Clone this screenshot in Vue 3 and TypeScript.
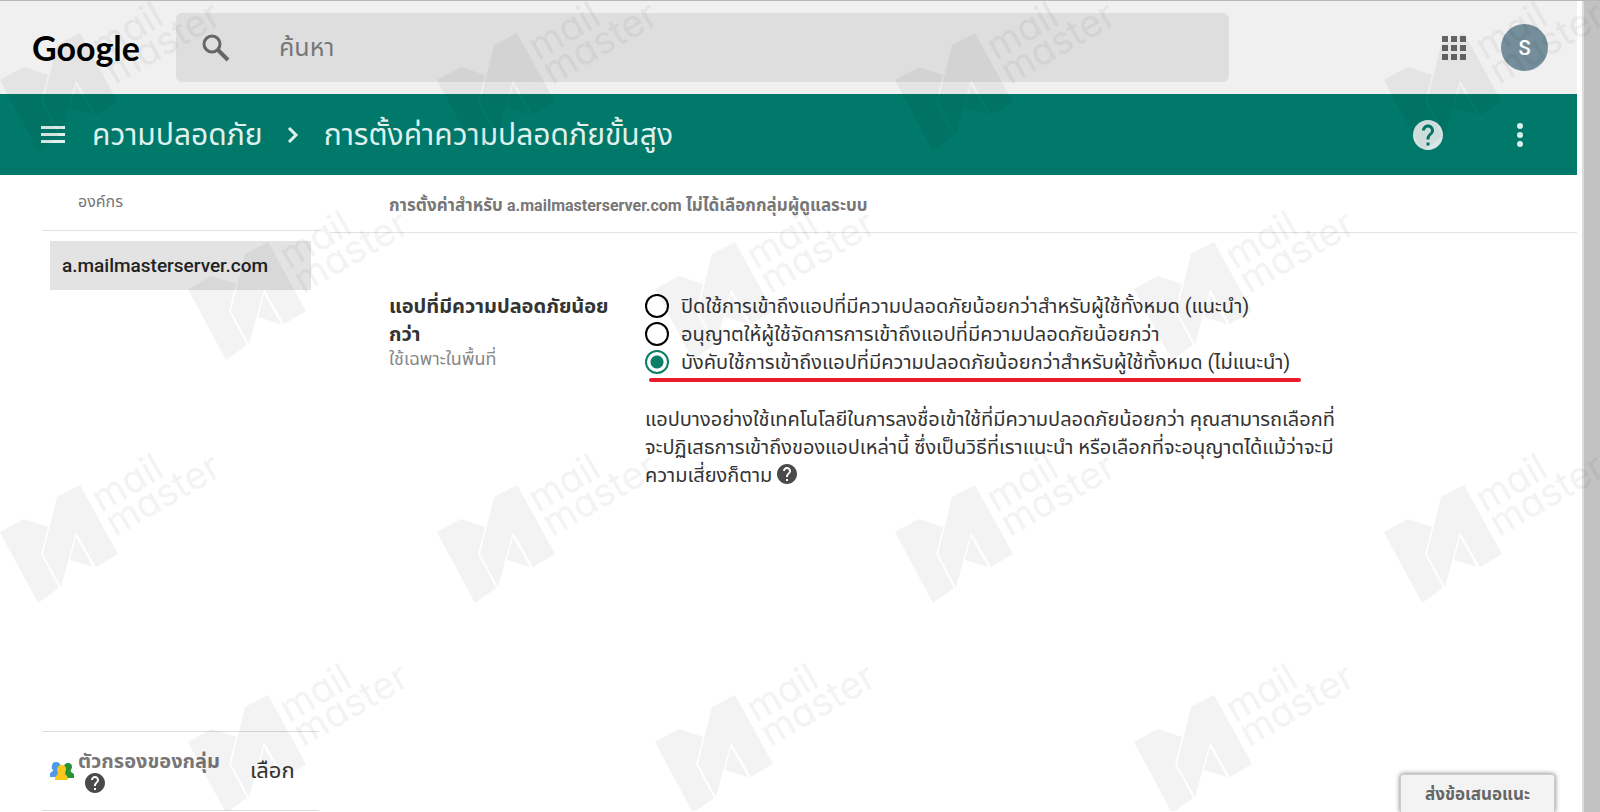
<script setup lang="ts">
import { ref } from 'vue'

interface Option {
  id: string
  label: string
}

const options: Option[] = [
  { id: 'disable', label: 'ปิดใช้การเข้าถึงแอปที่มีความปลอดภัยน้อยกว่าสำหรับผู้ใช้ทั้งหมด (แนะนำ)' },
  { id: 'allow', label: 'อนุญาตให้ผู้ใช้จัดการการเข้าถึงแอปที่มีความปลอดภัยน้อยกว่า' },
  { id: 'enforce', label: 'บังคับใช้การเข้าถึงแอปที่มีความปลอดภัยน้อยกว่าสำหรับผู้ใช้ทั้งหมด (ไม่แนะนำ)' },
]
const selected = ref('enforce')
const query = ref('')

const marks: [number, number][] = [
  [0, -12], [437, -12], [895, -12], [1384, -12],
  [188, 197], [655, 197], [1134, 197],
  [0, 440], [437, 440], [895, 440], [1384, 440],
  [188, 650], [655, 650], [1134, 650],
]
</script>

<template>
  <div class="window">
    <div class="page">
      <header class="top">
        <a class="logo" href="#">Google</a>
        <label class="search">
          <svg class="search-icon" viewBox="0 0 26 26" aria-hidden="true">
            <circle cx="9" cy="9" r="8" fill="none" stroke="#666" stroke-width="3" />
            <path d="M15 15L25 25" stroke="#666" stroke-width="4" />
          </svg>
          <input v-model="query" type="text" placeholder="ค้นหา" aria-label="ค้นหา" />
        </label>
        <button class="icon-btn apps" aria-label="แอป">
          <svg width="24" height="24" viewBox="0 0 24 24" fill="#666">
            <path d="M0 0h6v6H0zM9 0h6v6H9zM18 0h6v6h-6zM0 9h6v6H0zM9 9h6v6H9zM18 9h6v6h-6zM0 18h6v6H0zM9 18h6v6H9zM18 18h6v6h-6z" />
          </svg>
        </button>
        <button class="avatar">S</button>
      </header>

      <nav class="bar">
        <button class="icon-btn" aria-label="เมนู">
          <svg width="24" height="20" viewBox="0 0 24 20" fill="#dff0ed">
            <path d="M0 1h24v3H0zM0 8h24v3H0zM0 15h24v3H0z" />
          </svg>
        </button>
        <a class="crumb first" href="#">ความปลอดภัย</a>
        <svg class="chevron" width="12" height="18" viewBox="0 0 12 18" aria-hidden="true">
          <path d="M2 2l7 7-7 7" fill="none" stroke="#dff0ed" stroke-width="3" />
        </svg>
        <h1 class="crumb">การตั้งค่าความปลอดภัยขั้นสูง</h1>
        <button class="icon-btn help" aria-label="ความช่วยเหลือ">
          <svg width="30" height="30" viewBox="2 2 20 20" fill="#d9e8e6">
            <path d="M12 2C6.480 2 2 6.480 2 12s4.480 10 10 10 10-4.480 10-10S17.520 2 12 2zm1 17h-2v-2h2v2zm2.070-7.750l-.9.920C13.450 12.900 13 13.500 13 15h-2v-.5c0-1.100.45-2.100 1.170-2.830l1.240-1.260c.37-.36.59-.86.59-1.410 0-1.100-.9-2-2-2s-2 .9-2 2H8c0-2.210 1.790-4 4-4s4 1.790 4 4c0 .88-.36 1.680-.93 2.250z" />
          </svg>
        </button>
        <button class="icon-btn more" aria-label="เพิ่มเติม">
          <svg width="6" height="24" viewBox="0 0 6 24" fill="#d9f0ed">
            <circle cx="3" cy="3" r="3" /><circle cx="3" cy="12" r="3" /><circle cx="3" cy="21" r="3" />
          </svg>
        </button>
      </nav>

      <div class="body">
        <aside class="side">
          <h2 class="side-title">องค์กร</h2>
          <a class="org" href="#">a.mailmasterserver.com</a>
          <div class="filter">
            <svg class="people" width="24" height="20" viewBox="0 0 24 20" aria-hidden="true">
              <path d="M6 1c3 0 5 2 4 5 0 2-1 3 0 4v6H0v-3c0-2 2-2 3-3 0-2-2-2-1-5 0-2 1-4 4-4z" fill="#4e9ae8" />
              <path d="M18 2c3 0 4 2 4 4s-2 3-1 5c1 1 3 1 3 3v3H12V9c2-1 1-7 6-7z" fill="#259336" />
              <path d="M12 4c3 0 4 2 4 4s-1 3-1 5c1 1 3 2 3 6H5c0-4 2-5 3-6 0-2-1-3-1-5s2-4 5-4z" fill="#fbc61d" />
            </svg>
            <div class="filter-text">
              <strong>ตัวกรองของกลุ่ม</strong>
              <button class="icon-btn" aria-label="เกี่ยวกับตัวกรอง">
                <svg width="20" height="20" viewBox="2 2 20 20" fill="#4a4a4a">
                  <path d="M12 2C6.480 2 2 6.480 2 12s4.480 10 10 10 10-4.480 10-10S17.520 2 12 2zm1 17h-2v-2h2v2zm2.070-7.750l-.9.920C13.450 12.900 13 13.500 13 15h-2v-.5c0-1.100.45-2.100 1.170-2.830l1.240-1.260c.37-.36.59-.86.59-1.410 0-1.100-.9-2-2-2s-2 .9-2 2H8c0-2.210 1.790-4 4-4s4 1.790 4 4c0 .88-.36 1.680-.93 2.250z" />
                </svg>
              </button>
            </div>
            <button class="pick">เลือก</button>
          </div>
        </aside>

        <main class="main">
          <p class="scope">การตั้งค่าสำหรับ <span class="domain">a.mailmasterserver.com</span> ไม่ได้เลือกกลุ่มผู้ดูแลระบบ</p>
          <section class="setting">
            <div class="name">
              <h3 id="setting-name">แอปที่มีความปลอดภัยน้อย<br />กว่า</h3>
              <p>ใช้เฉพาะในพื้นที่</p>
            </div>
            <div class="value">
              <div class="options" role="radiogroup" aria-labelledby="setting-name">
                <label v-for="o in options" :key="o.id" class="option">
                  <input v-model="selected" type="radio" name="access" :value="o.id" />
                  <span>{{ o.label }}</span>
                </label>
              </div>
              <div class="underline"></div>
              <p class="note">
                แอปบางอย่างใช้เทคโนโลยีในการลงชื่อเข้าใช้ที่มีความปลอดภัยน้อยกว่า คุณสามารถเลือกที่<br />
                จะปฏิเสธการเข้าถึงของแอปเหล่านี้ ซึ่งเป็นวิธีที่เราแนะนำ หรือเลือกที่จะอนุญาตได้แม้ว่าจะมี<br />
                ความเสี่ยงก็ตาม
                <button class="icon-btn note-help" aria-label="ดูข้อมูลเพิ่มเติม">
                  <svg width="20" height="20" viewBox="2 2 20 20" fill="#4a4a4a">
                    <path d="M12 2C6.480 2 2 6.480 2 12s4.480 10 10 10 10-4.480 10-10S17.520 2 12 2zm1 17h-2v-2h2v2zm2.070-7.750l-.9.920C13.450 12.900 13 13.500 13 15h-2v-.5c0-1.100.45-2.100 1.170-2.830l1.240-1.260c.37-.36.59-.86.59-1.410 0-1.100-.9-2-2-2s-2 .9-2 2H8c0-2.210 1.790-4 4-4s4 1.790 4 4c0 .88-.36 1.680-.93 2.250z" />
                  </svg>
                </button>
              </p>
            </div>
          </section>
        </main>
      </div>
      <button class="feedback">ส่งข้อเสนอแนะ</button>
    </div>
    <div class="scrollbar"></div>

    <svg class="watermark" aria-hidden="true">
      <g v-for="([x, y], i) in marks" :key="i" :transform="`translate(${x} ${y})`">
        <path d="M0 92L24 79L48 87L41 114L59 148L38 163Z" />
        <path d="M57 57L80 45L118 114L96 127L76 92L61 147L43 114Z" />
        <path d="M76 97L93 127L70 120Z" />
        <g transform="translate(101 73) rotate(-30)">
          <text x="0" y="0">mail</text>
          <text x="0" y="28">master</text>
        </g>
      </g>
    </svg>
  </div>
</template>

<style>
body {
  margin: 0;
}
</style>

<style scoped>
.window {
  position: relative;
  display: flex;
  box-sizing: border-box;
  min-height: 100vh;
  overflow: hidden;
  border-top: 1px solid #b8b8b8;
  background: #fff;
  color: #333;
  font-family: Roboto, "Noto Sans", "Noto Sans Thai", sans-serif;
  font-size: 20px;
  line-height: 28px;
}
.page {
  position: relative;
  display: flex;
  flex: 1;
  flex-direction: column;
  margin-right: 5px;
}
.scrollbar {
  width: 16px;
  border-left: 2px solid #dcdcdc;
  background: #c2c2c2;
}
h1, h2, h3, p {
  margin: 0;
}
a {
  color: inherit;
  text-decoration: none;
}
button {
  padding: 0;
  border: 0;
  background: none;
  color: inherit;
  font: inherit;
}
.icon-btn {
  display: inline-flex;
}
.top {
  display: flex;
  align-items: center;
  height: 93px;
  padding-right: 29px;
  background: #f0f0f0;
}
.logo {
  width: 144px;
  padding-left: 32px;
  color: #000;
  font: 700 34px/44px Lato, sans-serif;
}
.search {
  display: flex;
  flex: 1;
  align-items: center;
  height: 69px;
  padding-left: 27px;
  border-radius: 6px;
  background: #dedede;
}
.search-icon {
  width: 26px;
  height: 26px;
  overflow: visible;
}
.search input {
  flex: 1;
  margin-left: 50px;
  padding: 0;
  border: 0;
  outline: 0;
  background: none;
  font: inherit;
  font-size: 25px;
}
.search input::placeholder {
  color: #777;
  opacity: 1;
}
.apps {
  margin: 0 35px 0 213px;
}
.avatar {
  width: 47px;
  height: 47px;
  border-radius: 50%;
  background: #748e9b;
  color: #fff;
  font-size: 20px;
  font-weight: 500;
}
.bar {
  display: flex;
  align-items: center;
  height: 81px;
  padding: 0 54px 0 41px;
  background: #00796b;
  color: #dff0ed;
}
.crumb {
  font-size: 30px;
  font-weight: 400;
  line-height: 40px;
  white-space: nowrap;
}
.first {
  margin-left: 27px;
}
.chevron {
  margin: 0 25px 0 24px;
}
.help {
  margin-left: auto;
}
.more {
  margin-left: 74px;
}
.body {
  display: flex;
  flex: 1;
}
.side {
  display: flex;
  flex-direction: column;
  width: 277px;
  margin: 0 11px 0 42px;
}
.side-title {
  height: 55px;
  padding-left: 36px;
  border-bottom: 1px solid #e2e2e2;
  color: #777;
  font-size: 16px;
  font-weight: 400;
  line-height: 54px;
}
.org {
  margin: 10px 8px 0;
  padding: 0 12px;
  background: #e3e3e3;
  color: #222;
  font-size: 19px;
  font-weight: 500;
  line-height: 49px;
}
.filter {
  display: flex;
  align-items: center;
  height: 78px;
  margin-top: auto;
  margin-bottom: 1px;
  padding-left: 8px;
  border-top: 1px solid #ddd;
  border-bottom: 1px solid #ddd;
}
.filter-text {
  width: 141px;
  margin: 0 31px 0 4px;
  color: #777;
  line-height: 24px;
  white-space: nowrap;
}
.filter-text strong {
  display: block;
}
.filter-text .icon-btn {
  display: flex;
  margin-left: 7px;
}
.pick {
  font-size: 22px;
}
.main {
  flex: 1;
}
.scope {
  height: 57px;
  padding-left: 59px;
  border-bottom: 1px solid #e2e2e2;
  color: #777;
  font-size: 17px;
  font-weight: 700;
  line-height: 60px;
  white-space: nowrap;
}
.domain {
  font-size: 16px;
}
.setting {
  display: flex;
  padding: 59px 0 0 59px;
}
.name {
  width: 256px;
  white-space: nowrap;
}
.name h3 {
  font-size: 20px;
  line-height: 28px;
}
.name p {
  color: #888;
  font-size: 18px;
  line-height: 22px;
}
.value {
  white-space: nowrap;
}
.option {
  display: flex;
  align-items: center;
  gap: 12px;
}
.option input {
  width: 24px;
  height: 24px;
  margin: 0;
  border: 2px solid #000;
  border-radius: 50%;
  appearance: none;
}
.option input:checked {
  border-color: #0b8068;
  background: radial-gradient(circle, #0b8068 6px, #fff 7px);
}
.underline {
  width: 652px;
  height: 4px;
  margin: 2px 0 0 4px;
  border-radius: 2px;
  background: #e81c2a;
}
.note {
  margin-top: 23px;
}
.note-help {
  vertical-align: -2px;
}
.feedback {
  position: absolute;
  right: 22px;
  bottom: 0;
  width: 155px;
  height: 38px;
  border: 1px solid #ccc;
  border-bottom: 0;
  border-radius: 3px 3px 0 0;
  background: #f3f3f3;
  box-shadow: 0 0 5px #777;
  color: #666;
  font-size: 17px;
  font-weight: 700;
}
.watermark {
  position: absolute;
  top: -1px;
  left: 0;
  width: 100%;
  height: 100%;
  fill: #000;
  opacity: 0.045;
  pointer-events: none;
}
.watermark text {
  font-family: Inter, sans-serif;
  font-size: 38px;
  font-feature-settings: "cv11";
}
</style>
